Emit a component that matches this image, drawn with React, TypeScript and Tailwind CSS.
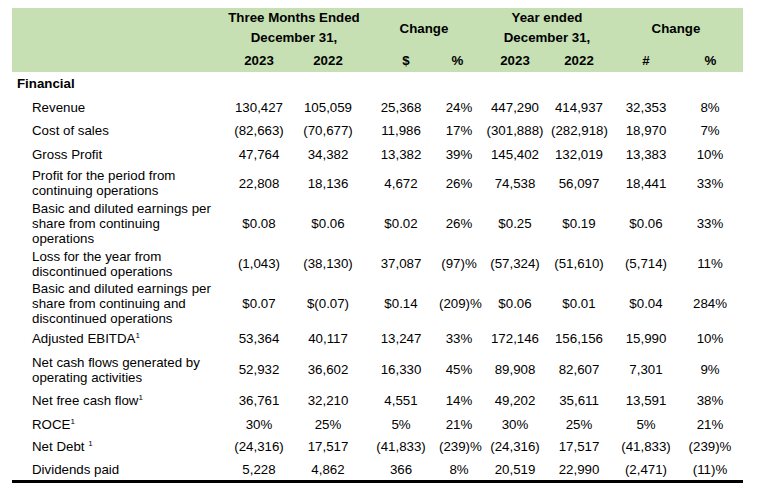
import React from "react";

type Row = { label: React.ReactNode; vals: string[]; h: number };

const Sup = () => <sup className="text-[8px] top-[-5px]">1</sup>;

const rows: Row[] = [
  { label: "Revenue", vals: ["130,427", "105,059", "25,368", "24%", "447,290", "414,937", "32,353", "8%"], h: 24 },
  { label: "Cost of sales", vals: ["(82,663)", "(70,677)", "11,986", "17%", "(301,888)", "(282,918)", "18,970", "7%"], h: 23 },
  { label: "Gross Profit", vals: ["47,764", "34,382", "13,382", "39%", "145,402", "132,019", "13,383", "10%"], h: 24 },
  { label: <>Profit for the period from<br />continuing operations</>, vals: ["22,808", "18,136", "4,672", "26%", "74,538", "56,097", "18,441", "33%"], h: 34 },
  { label: <>Basic and diluted earnings per<br />share from continuing<br />operations</>, vals: ["$0.08", "$0.06", "$0.02", "26%", "$0.25", "$0.19", "$0.06", "33%"], h: 46 },
  { label: <>Loss for the year from<br />discontinued operations</>, vals: ["(1,043)", "(38,130)", "37,087", "(97)%", "(57,324)", "(51,610)", "(5,714)", "11%"], h: 35 },
  { label: <>Basic and diluted earnings per<br />share from continuing and<br />discontinued operations</>, vals: ["$0.07", "$(0.07)", "$0.14", "(209)%", "$0.06", "$0.01", "$0.04", "284%"], h: 44 },
  { label: <>Adjusted EBITDA<Sup /></>, vals: ["53,364", "40,117", "13,247", "33%", "172,146", "156,156", "15,990", "10%"], h: 27 },
  { label: <>Net cash flows generated by<br />operating activities</>, vals: ["52,932", "36,602", "16,330", "45%", "89,908", "82,607", "7,301", "9%"], h: 35 },
  { label: <>Net free cash flow<Sup /></>, vals: ["36,761", "32,210", "4,551", "14%", "49,202", "35,611", "13,591", "38%"], h: 26 },
  { label: <>ROCE<Sup /></>, vals: ["30%", "25%", "5%", "21%", "30%", "25%", "5%", "21%"], h: 22 },
  { label: <>Net Debt <Sup /></>, vals: ["(24,316)", "17,517", "(41,833)", "(239)%", "(24,316)", "17,517", "(41,833)", "(239)%"], h: 23 },
  { label: "Dividends paid", vals: ["5,228", "4,862", "366", "8%", "20,519", "22,990", "(2,471)", "(11)%"], h: 22 },
];

const colW = ["w-[68px]", "w-[70px]", "w-[76px]", "w-[40px]", "w-[72px]", "w-[56px]", "w-[78px]", "w-[50px]"];

export default function App() {
  return (
    <div
      className="w-[758px] h-[491px] bg-white text-black pt-[8px] pl-[12px]"
      style={{ fontFamily: '"Liberation Sans", Arial, sans-serif' }}
    >
      <div className="w-[731px] text-[13.3px] leading-[15px]">
        {/* Header */}
        <div className="bg-[#c6e0b4] h-[64px] flex font-bold">
          <div className="w-[213px]" />
          <div className="w-[138px] flex flex-col">
            <div className="h-[40px] flex flex-col items-center leading-[19.5px]">
              <div>Three Months Ended</div>
              <div>December 31,</div>
            </div>
            <div className="flex h-[24px] items-center">
              <div className="w-[68px] text-center">2023</div>
              <div className="w-[70px] text-center">2022</div>
            </div>
          </div>
          <div className="w-[116px] flex flex-col">
            <div className="h-[40px] flex items-center justify-center pl-[6px] pt-[1px]">Change</div>
            <div className="flex h-[24px] items-center">
              <div className="w-[76px] text-center pl-[10px]">$</div>
              <div className="w-[40px] text-center pr-[3px]">%</div>
            </div>
          </div>
          <div className="w-[128px] flex flex-col">
            <div className="h-[40px] flex flex-col items-center leading-[19.5px] pl-[8px]">
              <div>Year ended</div>
              <div>December 31,</div>
            </div>
            <div className="flex h-[24px] items-center">
              <div className="w-[72px] text-center">2023</div>
              <div className="w-[56px] text-center">2022</div>
            </div>
          </div>
          <div className="w-[128px] flex flex-col">
            <div className="h-[40px] flex items-center justify-center pl-[10px] pt-[1px]">Change</div>
            <div className="flex h-[24px] items-center">
              <div className="w-[78px] text-center">#</div>
              <div className="w-[50px] text-center pl-[1px]">%</div>
            </div>
          </div>
        </div>

        <div className="h-[23px] flex items-center pl-[5px] font-bold">Financial</div>

        {rows.map((r, i) => (
          <div key={i} className="flex items-center" style={{ height: r.h }}>
            <div className="w-[213px] pl-[20px]">{r.label}</div>
            {r.vals.map((v, j) => (
              <div key={j} className={`${colW[j]} text-center whitespace-nowrap`}>{v}</div>
            ))}
          </div>
        ))}

        <div className="h-[3px] bg-black" />
      </div>
    </div>
  );
}
